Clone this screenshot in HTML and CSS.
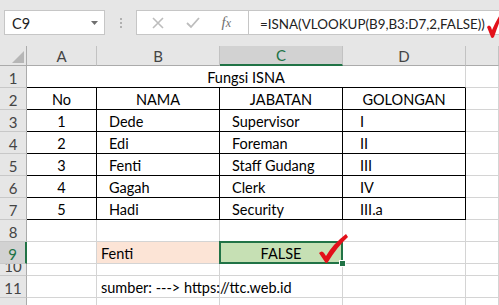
FILE: index.html
```html
<!DOCTYPE html>
<html lang="id">
<head>
  <meta charset="UTF-8">
  <title>Fungsi ISNA</title>
  <link rel="stylesheet" href="styles.css">
</head>
<body>
  <div class="app">
    <!-- formula bar -->
    <div class="toolbar">
      <div class="namebox">
        <span>C9</span>
        <svg class="caret" width="8" height="5" viewBox="0 0 8 5"><path d="M0 0h7L3.5 4z" fill="#6f6f6f"/></svg>
      </div>
      <svg class="grip" width="3" height="11" viewBox="0 0 3 11">
        <rect x="0" y="0" width="2" height="2" fill="#b0b0b0"/>
        <rect x="0" y="4" width="2" height="2" fill="#b0b0b0"/>
        <rect x="0" y="8" width="2" height="2" fill="#b0b0b0"/>
      </svg>
      <div class="fbar">
        <div class="fbtns">
          <svg width="12" height="12" viewBox="0 0 12 12"><path d="M1 1l10 10M11 1L1 11" stroke="#bdbdbd" stroke-width="1.6"/></svg>
          <svg width="14" height="12" viewBox="0 0 14 12"><path d="M1 6l4 4 8-9" stroke="#bdbdbd" stroke-width="1.8" fill="none"/></svg>
          <span class="fx">f<i>x</i></span>
        </div>
        <div class="formula">=ISNA(VLOOKUP(B9,B3:D7,2,FALSE))</div>
        <svg class="mark mark-top" width="16" height="26" viewBox="0 0 16 26">
          <path d="M1 14 Q3 11 5 14 L6 17 Q10 8 15 0 L16 3 Q12 12 8 24 Q6 26 5 24 Z" fill="#e3101a"/>
        </svg>
      </div>
    </div>

    <!-- sheet -->
    <div class="sheet">
      <div class="corner"><span class="tri"></span></div>
      <div class="hd">A</div>
      <div class="hd">B</div>
      <div class="hd sel">C</div>
      <div class="hd">D</div>
      <div class="hd"></div>

      <div class="rh">1</div>
      <div class="c title">Fungsi ISNA</div>
      <div class="c"></div>

      <div class="rh">2</div>
      <div class="c t mid">No</div>
      <div class="c t mid">NAMA</div>
      <div class="c t mid">JABATAN</div>
      <div class="c t mid">GOLONGAN</div>
      <div class="c"></div>

      <div class="rh">3</div>
      <div class="c t mid">1</div>
      <div class="c t ind">Dede</div>
      <div class="c t ind">Supervisor</div>
      <div class="c t ind2">I</div>
      <div class="c"></div>

      <div class="rh">4</div>
      <div class="c t mid">2</div>
      <div class="c t ind">Edi</div>
      <div class="c t ind">Foreman</div>
      <div class="c t ind2">II</div>
      <div class="c"></div>

      <div class="rh">5</div>
      <div class="c t mid">3</div>
      <div class="c t ind">Fenti</div>
      <div class="c t ind">Staff Gudang</div>
      <div class="c t ind2">III</div>
      <div class="c"></div>

      <div class="rh">6</div>
      <div class="c t mid">4</div>
      <div class="c t ind">Gagah</div>
      <div class="c t ind">Clerk</div>
      <div class="c t ind2">IV</div>
      <div class="c"></div>

      <div class="rh">7</div>
      <div class="c t mid">5</div>
      <div class="c t ind">Hadi</div>
      <div class="c t ind">Security</div>
      <div class="c t ind2">III.a</div>
      <div class="c"></div>

      <div class="rh">8</div>
      <div class="c"></div>
      <div class="c"></div>
      <div class="c"></div>
      <div class="c"></div>
      <div class="c"></div>

      <div class="rh sel">9</div>
      <div class="c"></div>
      <div class="c peach">Fenti</div>
      <div class="c green mid active">FALSE
        <span class="handle"></span>
        <svg class="mark mark-cell" width="30" height="30" viewBox="0 0 30 30">
          <path d="M1 19 Q4 16 6 19 L8 22 Q15 10 28 0 L30 3 Q19 13 10 28 Q8 30 7 28 Z" fill="#e3101a"/>
        </svg>
      </div>
      <div class="c"></div>
      <div class="c"></div>

      <div class="rh short">10</div>
      <div class="c"></div>
      <div class="c"></div>
      <div class="c"></div>
      <div class="c"></div>
      <div class="c"></div>

      <div class="rh">11</div>
      <div class="c"></div>
      <div class="c over">sumber: ---&gt; https://ttc.web.id</div>
      <div class="c"></div>
      <div class="c"></div>
      <div class="c"></div>

      <div class="rh">12</div>
      <div class="c"></div>
      <div class="c"></div>
      <div class="c"></div>
      <div class="c"></div>
      <div class="c"></div>
    </div>
  </div>
</body>
</html>
```

FILE: styles.css
```css
body {
  margin: 0;
  background: #fff;
  font-family: Lato, "Liberation Sans", sans-serif;
  font-size: 14.5px;
  color: #000;
  overflow: hidden;
}
.app { width: 499px; height: 305px; overflow: hidden; }

/* formula bar */
.toolbar {
  height: 46px;
  background: #e6e6e6;
  display: flex;
  align-items: flex-start;
  padding: 10px 0 0 4px;
  box-sizing: border-box;
}
.namebox {
  width: 101px;
  height: 25px;
  box-sizing: border-box;
  background: #fff;
  border: 1px solid #c6c6c6;
  display: flex;
  align-items: center;
  justify-content: space-between;
  padding: 2px 5px 0 7px;
  color: #222;
}
.grip { margin: 8px 0 0 15px; }
.fbar {
  flex: 1;
  height: 25px;
  margin-left: 13px;
  box-sizing: border-box;
  background: #fff;
  border: 1px solid #c6c6c6;
  border-right: none;
  display: flex;
  align-items: center;
  position: relative;
}
.fbtns {
  width: 112px;
  height: 100%;
  box-sizing: border-box;
  border-right: 1px solid #c6c6c6;
  display: flex;
  align-items: center;
  justify-content: space-around;
  padding: 0 6px 0 4px;
}
.fx {
  font-family: "Liberation Serif", serif;
  font-style: italic;
  font-size: 15px;
  color: #707070;
}
.fx i { font-size: 12px; }
.formula {
  padding: 3px 0 0 11px;
  color: #222;
  font-size: 13.4px;
  white-space: nowrap;
}
.mark { position: absolute; }
.mark-top { right: -3px; top: 2px; }

/* sheet grid */
.sheet {
  display: grid;
  grid-template-columns: 27px 70px 123px 123px 123px 1fr;
  grid-template-rows: 20px repeat(9, 22px) 12px 22px 22px;
}
.sheet > div {
  box-sizing: border-box;
  overflow: hidden;
  white-space: nowrap;
}
.corner {
  background: #e6e6e6;
  border-right: 1px solid #ababab;
  border-bottom: 1px solid #ababab;
  position: relative;
}
.tri {
  position: absolute;
  right: 2px;
  bottom: 2px;
  width: 0;
  height: 0;
  border-left: 12px solid transparent;
  border-bottom: 12px solid #b6b6b6;
}
.hd {
  background: #e6e6e6;
  border-right: 1px solid #c2c2c2;
  border-bottom: 1px solid #ababab;
  color: #444;
  font-size: 15px;
  display: flex;
  align-items: center;
  justify-content: center;
}
.hd.sel {
  background: #d2d2d2;
  color: #217346;
  border-bottom: 2px solid #217346;
}
.rh {
  background: #e6e6e6;
  border-right: 1px solid #ababab;
  border-bottom: 1px solid #c8c8c8;
  color: #444;
  font-size: 15px;
  display: flex;
  align-items: flex-end;
  justify-content: center;
  line-height: 18px;
  padding-bottom: 0;
}
.rh.short { line-height: 17px; }
.rh.sel {
  background: #d2d2d2;
  color: #217346;
  border-right: 2px solid #217346;
}
.c {
  border-right: 1px solid #d4d4d4;
  border-bottom: 1px solid #d4d4d4;
  display: flex;
  align-items: flex-end;
  line-height: 19px;
  padding: 0 4px 0;
}
.title {
  grid-column: 2 / 6;
  justify-content: center;
  border-bottom-color: #000;
}
.t { border-right-color: #000; border-bottom-color: #000; }
.mid { justify-content: center; }
.ind { padding-left: 12px; }
.ind2 { padding-left: 17px; }
.peach { background: #fce4d6; }
.green { background: #c6e0b4; }
.sheet > .active { overflow: visible; position: relative; }
.active::after {
  content: "";
  position: absolute;
  left: -1px;
  top: -1px;
  right: -1px;
  bottom: -1px;
  border: 2px solid #217346;
  pointer-events: none;
}
.handle {
  position: absolute;
  right: -4px;
  bottom: -4px;
  width: 5px;
  height: 5px;
  background: #217346;
  border: 1px solid #fff;
  z-index: 2;
}
.mark-cell { left: 98px; top: -8px; z-index: 3; }
.sheet > .over { overflow: visible; position: relative; z-index: 1; }
```
